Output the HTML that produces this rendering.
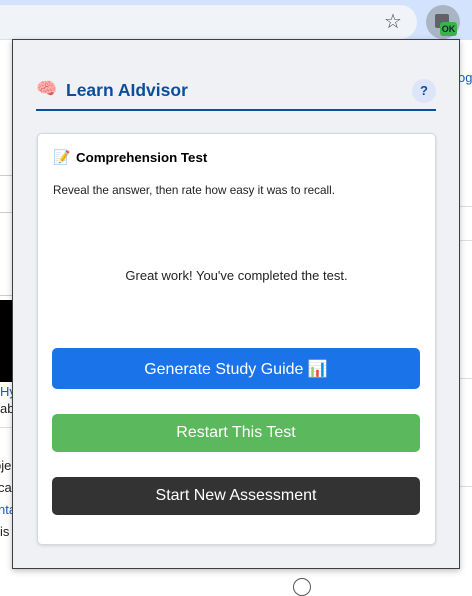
<!DOCTYPE html>
<html><head><meta charset="utf-8"><style>
*{margin:0;padding:0;box-sizing:border-box}
body{width:472px;height:583px;overflow:hidden;background:#fff;position:relative;font-family:"Liberation Sans",Arial,sans-serif}
.abs{position:absolute}
.btn{position:absolute;left:52px;width:368px;border-radius:5px;color:#fff;font-size:16px;display:flex;align-items:center;justify-content:center}
</style></head><body>
<div class="abs" style="left:0;top:0;width:472px;height:40px;background:#d3e3fd"></div>
<div class="abs" style="left:-20px;top:5px;width:437px;height:34px;background:#f0f4f9;border-radius:17px"></div>
<div class="abs" style="left:384px;top:9px;font-size:20px;color:#444">☆</div>
<div class="abs" style="left:426px;top:5px;width:34px;height:34px;border-radius:50%;background:#a9b4c4"></div>
<div class="abs" style="left:435px;top:14px;width:14px;height:14px;background:#5f6368;border-radius:2px"></div>
<div class="abs" style="left:440px;top:22px;width:17px;height:14px;background:#3cb34a;border-radius:3px;font-size:9px;font-weight:bold;color:#123;text-align:center;line-height:14px">OK</div>
<!-- background page -->
<div class="abs" style="left:0;top:175px;width:12px;height:1px;background:#ccc"></div>
<div class="abs" style="left:0;top:212px;width:12px;height:1px;background:#ccc"></div>
<div class="abs" style="left:0;top:295px;width:12px;height:1px;background:#ccc"></div>
<div class="abs" style="left:0;top:300px;width:12px;height:82px;background:#000"></div>
<div class="abs" style="left:0;top:384px;font-size:13px;color:#1a57c8">Hy</div>
<div class="abs" style="left:0;top:401px;font-size:13px;color:#222">ab</div>
<div class="abs" style="left:0;top:427px;width:12px;height:1px;background:#ddd"></div>
<div class="abs" style="left:-6px;top:458px;font-size:13px;color:#222">oje</div>
<div class="abs" style="left:-2px;top:480px;font-size:13px;color:#222">cau</div>
<div class="abs" style="left:-2px;top:502px;font-size:13px;color:#1a57c8">nta</div>
<div class="abs" style="left:0;top:524px;font-size:13px;color:#222">is</div>
<div class="abs" style="left:458px;top:70px;font-size:13px;color:#1a57c8">og</div>
<div class="abs" style="left:460px;top:206px;width:12px;height:1px;background:#ddd"></div>
<div class="abs" style="left:460px;top:240px;width:12px;height:1px;background:#ddd"></div>
<div class="abs" style="left:460px;top:378px;width:12px;height:1px;background:#ddd"></div>
<div class="abs" style="left:460px;top:486px;width:12px;height:1px;background:#ddd"></div>
<div class="abs" style="left:293px;top:578px;width:18px;height:18px;border:1px solid #555;border-radius:50%"></div>
<!-- popup -->
<div class="abs" style="left:12px;top:39px;width:448px;height:530px;background:#eff1f5;border:1px solid #3c3f44;box-shadow:0 2px 6px rgba(0,0,0,.25)"></div>
<div class="abs" style="left:36px;top:78px;font-size:17px;line-height:22px">🧠</div>
<div class="abs" style="left:66px;top:79px;font-size:17.5px;font-weight:bold;color:#0b4f9c;line-height:22px">Learn AIdvisor</div>
<div class="abs" style="left:412px;top:79px;width:24px;height:24px;border-radius:50%;background:#dde5fb;color:#0b4f9c;font-weight:bold;font-size:13px;text-align:center;line-height:24px">?</div>
<div class="abs" style="left:36px;top:109px;width:400px;height:2px;background:#0b4f9c"></div>
<div class="abs" style="left:37px;top:133px;width:399px;height:412px;background:#fff;border:1px solid #d5d7db;border-radius:5px;box-shadow:0 1px 3px rgba(0,0,0,.12)"></div>
<div class="abs" style="left:53px;top:148px;font-size:14px;line-height:18px">📝</div>
<div class="abs" style="left:76px;top:150px;font-size:13.3px;font-weight:bold;color:#000;line-height:16px">Comprehension Test</div>
<div class="abs" style="left:53px;top:184px;font-size:11.7px;color:#222;line-height:14px">Reveal the answer, then rate how easy it was to recall.</div>
<div class="abs" style="left:37px;top:268px;width:399px;text-align:center;font-size:13px;color:#222;line-height:16px">Great work! You've completed the test.</div>
<div class="btn" style="top:348px;height:41px;background:#1a73e8">Generate Study Guide&nbsp;📊</div>
<div class="btn" style="top:414px;height:38px;background:#5cb85c">Restart This Test</div>
<div class="btn" style="top:477px;height:38px;background:#333">Start New Assessment</div>
</body></html>
